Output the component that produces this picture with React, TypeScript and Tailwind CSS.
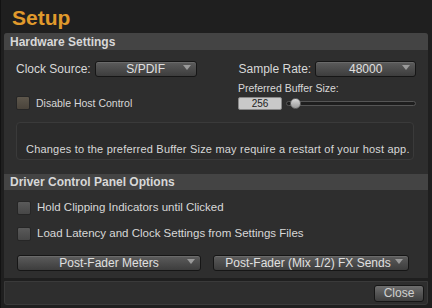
import React from "react";

const font = { fontFamily: '"Liberation Sans", Arial, sans-serif' };

function Dropdown({ label, className }: { label: string; className: string }) {
  return (
    <div
      className={`relative flex h-[16px] items-center justify-center rounded-[3px] border border-[#161616] bg-gradient-to-b from-[#5c5c5c] to-[#3d3d3d] text-[12px] text-[#e0e0e0] shadow-[inset_0_1px_0_#6a6a6a] ${className}`}
    >
      <span className="leading-none">{label}</span>
      <span className="absolute right-[5px] top-[3px] h-0 w-0 border-x-[4px] border-t-[5px] border-x-transparent border-t-[#9a9a9a]" />
    </div>
  );
}

function Checkbox({ tint }: { tint?: boolean }) {
  return (
    <div
      className={`h-[14px] w-[14px] shrink-0 rounded-[2px] border border-[#262626] ${
        tint ? "bg-gradient-to-b from-[#5e574c] to-[#4a443b]" : "bg-gradient-to-b from-[#5a5a5a] to-[#474747]"
      }`}
    />
  );
}

function Header({ title, className }: { title: string; className: string }) {
  return (
    <div className={`flex items-center bg-[#444444] pl-[6px] text-[12px] font-bold text-[#d8d8d8] ${className}`}>
      {title}
    </div>
  );
}

export default function App() {
  return (
    <div style={font} className="flex h-[308px] w-[432px] flex-col border-l border-[#121212] bg-[#1f1f1f] text-[#d8d8d8]">
      <div className="flex h-[33px] items-center pl-[11px] pt-[2px] text-[21px] font-bold text-[#e09a2c]">Setup</div>

      <div className="mx-[3px] flex h-[245px] w-[424px] flex-col overflow-hidden rounded-t-[3px] bg-[#2e2e2e]">
        <Header title="Hardware Settings" className="h-[17px]" />

        <div className="flex flex-col px-[12px]">
          <div className="mt-[11px] flex h-[16px] items-center text-[12px]">
            <span className="w-[79px]">Clock Source:</span>
            <Dropdown label="S/PDIF" className="w-[102px]" />
            <span className="ml-[42px] w-[77px]">Sample Rate:</span>
            <Dropdown label="48000" className="w-[101px]" />
          </div>

          <div className="flex">
            <div className="mt-[19px] flex h-[14px] w-[222px] items-center gap-[6px]">
              <Checkbox tint />
              <span className="text-[10.5px] leading-none">Disable Host Control</span>
            </div>
            <div className="mt-[5px] flex flex-col">
              <span className="text-[10.5px] leading-[12px]">Preferred Buffer Size:</span>
              <div className="mt-[3px] flex items-center">
                <div className="flex h-[13px] w-[44px] items-center justify-center rounded-[2px] border border-[#888] bg-[#c9c9c9] text-[10px] text-[#222]">
                  256
                </div>
                <div className="relative ml-[4px] h-[5px] w-[130px] rounded-full border border-[#555] bg-[#1e1e1e]">
                  <div className="absolute left-[3px] top-[-4px] h-[11px] w-[11px] rounded-full border border-[#666] bg-gradient-to-b from-[#d8d8d8] to-[#9a9a9a]" />
                </div>
              </div>
            </div>
          </div>

          <div className="mt-[12px] flex h-[38px] w-[398px] items-end rounded-[4px] border border-[#3a3a3a] bg-[#2b2b2b] pb-[2px] pl-[9px] text-[11px] tracking-[0.2px]">
            Changes to the preferred Buffer Size may require a restart of your host app.
          </div>
        </div>

        <Header title="Driver Control Panel Options" className="mt-[14px] h-[16px]" />

        <div className="flex flex-col px-[13px]">
          <div className="mt-[11px] flex h-[14px] items-center gap-[6px] text-[11.5px] leading-none">
            <Checkbox />
            <span>Hold Clipping Indicators until Clicked</span>
          </div>
          <div className="mt-[12px] flex h-[14px] items-center gap-[6px] text-[11.5px] leading-none">
            <Checkbox />
            <span>Load Latency and Clock Settings from Settings Files</span>
          </div>
          <div className="mt-[14px] flex gap-[12px]">
            <Dropdown label="Post-Fader Meters" className="w-[184px]" />
            <Dropdown label="Post-Fader (Mix 1/2) FX Sends" className="w-[196px] pr-[6px] text-[11px]" />
          </div>
        </div>
      </div>

      <div className="mx-[3px] mt-[3px] flex h-[24px] w-[424px] items-center justify-end rounded-b-[3px] border border-[#3a3a3a] bg-[#2e2e2e] pr-[3px]">
        <div className="flex h-[17px] w-[50px] items-center justify-center rounded-[3px] border border-[#161616] bg-gradient-to-b from-[#6e6e6e] to-[#3e3e3e] text-[12px] text-[#d0d0d0]">
          Close
        </div>
      </div>
    </div>
  );
}
